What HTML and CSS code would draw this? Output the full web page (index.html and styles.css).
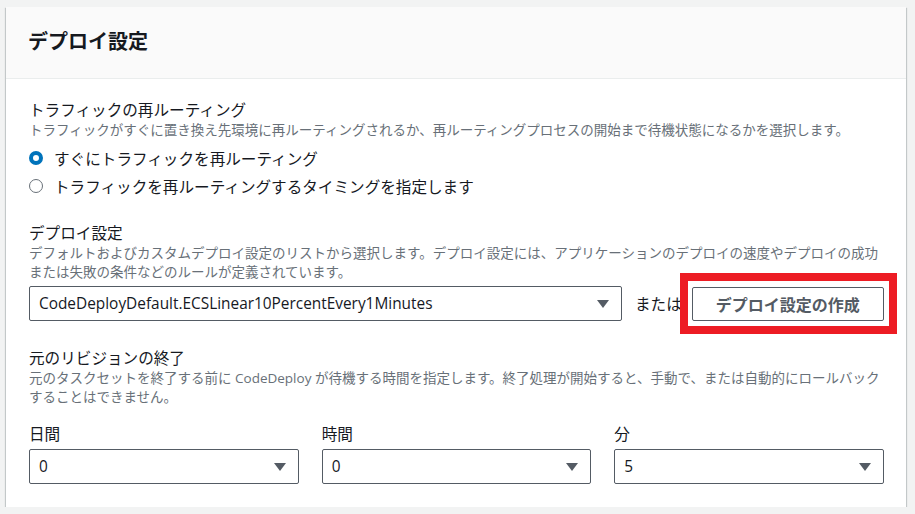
FILE: index.html
```html
<!DOCTYPE html>
<html lang="ja">
<head>
  <meta charset="UTF-8" />
  <title>デプロイ設定</title>
  <link rel="stylesheet" href="styles.css">
</head>
<body>

<div class="panel">
  <div class="panel-header">
    <h2>デプロイ設定</h2>
  </div>

  <div class="panel-body">
    <!-- トラフィックの再ルーティング -->
    <div class="field">
      <div class="field-label">トラフィックの再ルーティング</div>
      <div class="field-desc">トラフィックがすぐに置き換え先環境に再ルーティングされるか、再ルーティングプロセスの開始まで待機状態になるかを選択します。</div>
      <div class="radios">
        <label class="radio"><span class="radio-dot checked"></span>すぐにトラフィックを再ルーティング</label>
        <label class="radio"><span class="radio-dot"></span>トラフィックを再ルーティングするタイミングを指定します</label>
      </div>
    </div>

    <!-- デプロイ設定 -->
    <div class="field field-config">
      <div class="field-label">デプロイ設定</div>
      <div class="field-desc">デフォルトおよびカスタムデプロイ設定のリストから選択します。デプロイ設定には、アプリケーションのデプロイの速度やデプロイの成功<br>または失敗の条件などのルールが定義されています。</div>
      <div class="config-row">
        <div class="select wide">
          <span>CodeDeployDefault.ECSLinear10PercentEvery1Minutes</span>
          <span class="caret"></span>
        </div>
        <span class="or">または</span>
        <div class="btn-wrap">
          <button class="btn">デプロイ設定の作成</button>
          <div class="highlight"></div>
        </div>
      </div>
    </div>

    <!-- 元のリビジョンの終了 -->
    <div class="field field-revision">
      <div class="field-label">元のリビジョンの終了</div>
      <div class="field-desc">元のタスクセットを終了する前に CodeDeploy が待機する時間を指定します。終了処理が開始すると、手動で、または自動的にロールバック<br>することはできません。</div>
      <div class="time-grid">
        <div class="time-col">
          <div class="field-label">日間</div>
          <div class="select"><span>0</span><span class="caret"></span></div>
        </div>
        <div class="time-col">
          <div class="field-label">時間</div>
          <div class="select"><span>0</span><span class="caret"></span></div>
        </div>
        <div class="time-col">
          <div class="field-label">分</div>
          <div class="select"><span>5</span><span class="caret"></span></div>
        </div>
      </div>
    </div>
  </div>
</div>

</body>
</html>
```

FILE: styles.css
```css
* {
  margin: 0;
  padding: 0;
  box-sizing: border-box;
}

body {
  background: #f2f3f3;
  font-family: "Open Sans", "Noto Sans CJK JP", sans-serif;
  color: #16191f;
  padding: 7px 9px 0 6px;
}

/* Панель */
.panel {
  background: #fff;
  box-shadow: 0 1px 1px 0 rgba(0, 28, 36, 0.3), 1px 1px 1px 0 rgba(0, 28, 36, 0.15), -1px 1px 1px 0 rgba(0, 28, 36, 0.15);
}

.panel-header {
  height: 72px;
  background: #fafafa;
  border-bottom: 1px solid #eaeded;
  display: flex;
  align-items: center;
  padding: 0 22px 4px;
}

.panel-header h2 {
  font-size: 20px;
  font-weight: bold;
  color: #16191f;
}

.panel-body {
  padding: 21px 22px 23px 23px;
}

.field-config {
  margin-top: 23px;
}

.field-revision {
  margin-top: 27px;
}

.field-label {
  font-size: 15.6px;
  line-height: 20px;
}

.field-desc {
  font-size: 13.5px;
  line-height: 19px;
  color: #687078;
  margin-top: 1px;
  white-space: nowrap;
}

/* Радио */
.radios {
  margin-top: 4px;
}

.radio {
  display: flex;
  align-items: center;
  height: 28px;
  font-size: 15.6px;
}

.radio-dot {
  width: 14px;
  height: 14px;
  border-radius: 50%;
  border: 1.5px solid #687078;
  margin-right: 11px;
}

.radio-dot.checked {
  border: 4px solid #0073bb;
}

/* Селекты */
.config-row {
  display: flex;
  align-items: center;
  margin-top: 4px;
}

.select {
  height: 35px;
  border: 1px solid #545b64;
  border-radius: 2px;
  display: flex;
  align-items: center;
  justify-content: space-between;
  padding: 0 12px 0 9px;
  font-size: 15.4px;
}

.select.wide {
  width: 593px;
}

.caret {
  width: 0;
  height: 0;
  border-left: 6px solid transparent;
  border-right: 6px solid transparent;
  border-top: 8px solid #545b64;
}

.or {
  font-size: 15.6px;
  margin-left: 13px;
  margin-right: 10px;
}

.btn-wrap {
  position: relative;
}

.btn {
  width: 192px;
  height: 34px;
  background: #fff;
  border: 1px solid #545b64;
  border-radius: 2px;
  font-family: inherit;
  font-size: 16px;
  font-weight: bold;
  color: #545b64;
}

.highlight {
  position: absolute;
  left: -12px;
  right: -13px;
  top: -14px;
  bottom: -13px;
  border: 8px solid #ed1c24;
  pointer-events: none;
}

.time-grid {
  display: grid;
  grid-template-columns: repeat(3, 1fr);
  gap: 23px;
  margin-top: 17px;
}

.time-grid .select {
  margin-top: 5px;
}
```
